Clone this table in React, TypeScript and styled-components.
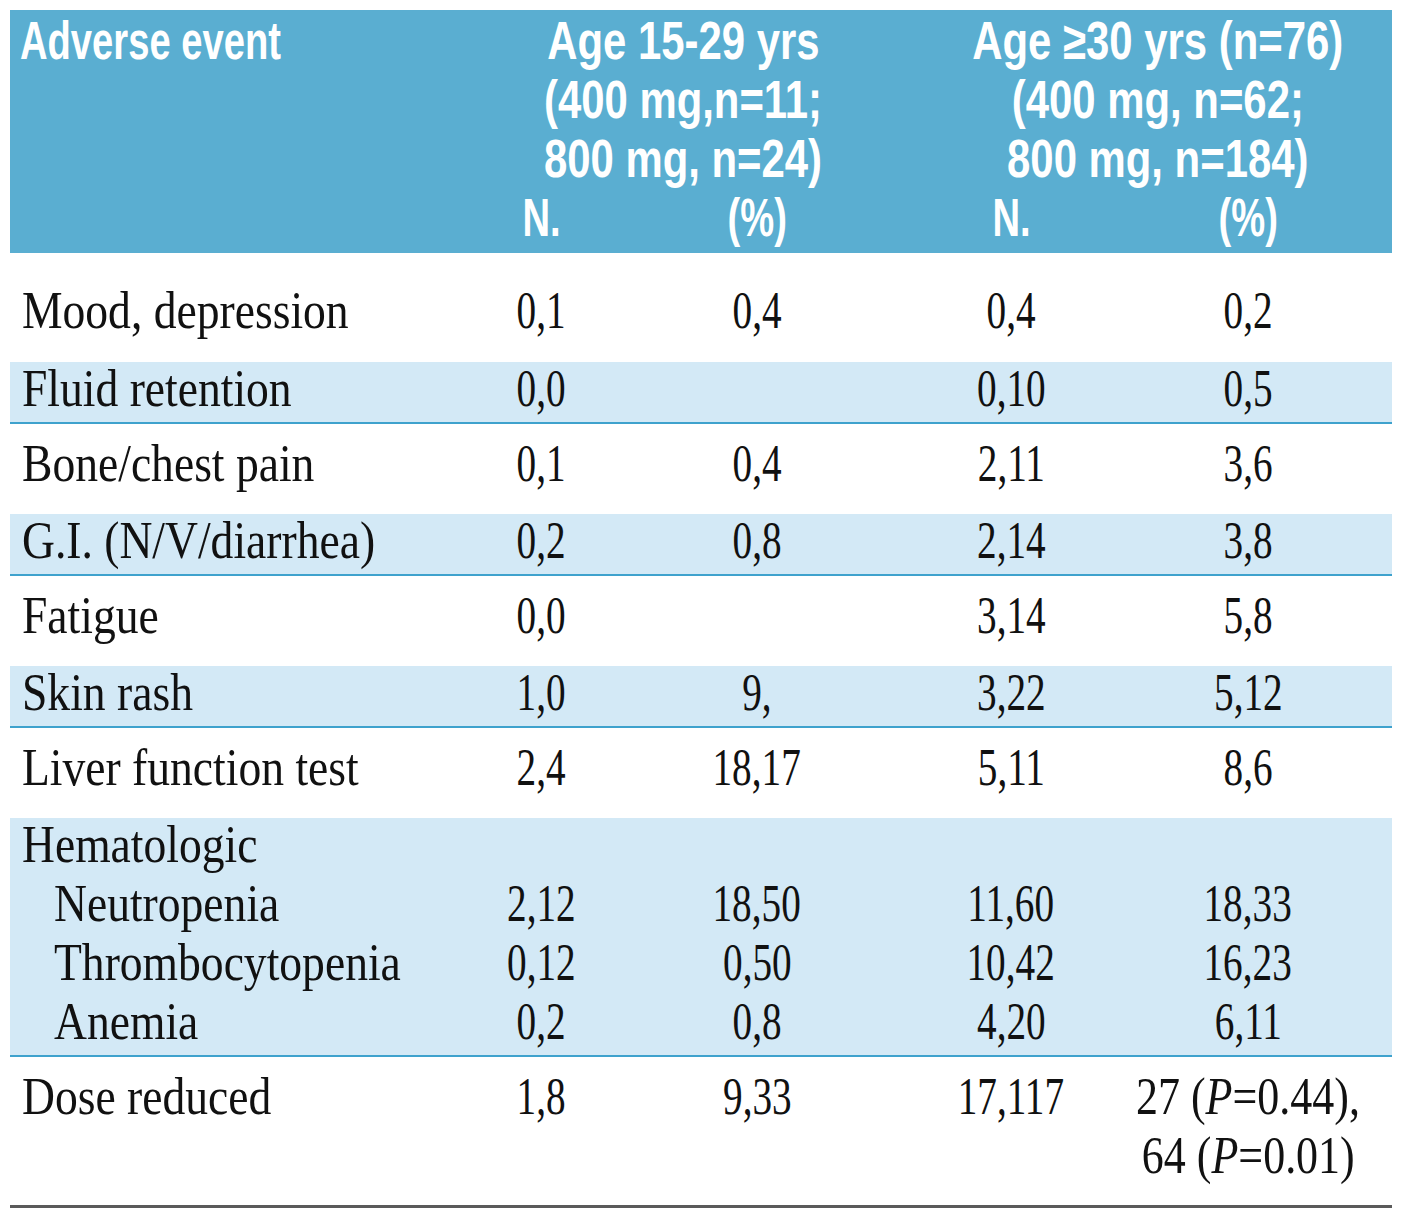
import React from "react";
import styled, { createGlobalStyle } from "styled-components";

const GlobalStyle = createGlobalStyle`
  html, body {
    margin: 0;
    padding: 0;
    background: #fff;
  }
  body {
    font-family: "Liberation Serif", "Times New Roman", serif;
  }
`;

// label | N. | (%) | gap | N. | (%)
const COLS = "430px 202px 230px 46px 186px 288px";

const Table = styled.div`
  width: 1382px;
  margin: 10px 0 0 10px;
  border-bottom: 3px solid #5a5a5a;
`;

const Head = styled.div`
  background: #5aaed1;
  color: #fff;
  font-family: "Liberation Sans", Arial, sans-serif;
  font-weight: 700;
  font-size: 53px;
  line-height: 59px;
  padding: 1px 0 6px;
`;

const HeadTop = styled.div`
  display: grid;
  grid-template-columns: 510px 326px 100px 424px 22px;
`;

const HeadCell = styled.div<{ $col: number; $left?: boolean }>`
  grid-column: ${(p) => p.$col};
  display: flex;
  flex-direction: column;
  align-items: ${(p) => (p.$left ? "flex-start" : "center")};
  padding-left: ${(p) => (p.$left ? "10px" : "0")};
`;

const Line = styled.div`
  display: grid;
  grid-template-columns: ${COLS};
`;

const Squeeze = styled.span<{ $x: number; $origin?: string }>`
  display: inline-block;
  white-space: nowrap;
  transform: scaleX(${(p) => p.$x});
  transform-origin: ${(p) => p.$origin ?? "center"};
`;

const Band = styled.div<{
  $tint?: boolean;
  $top: number;
  $bottom: number;
  $rule?: boolean;
}>`
  display: flex;
  flex-direction: column;
  gap: 7px;
  background: ${(p) => (p.$tint ? "#d3e9f6" : "#fff")};
  padding: ${(p) => p.$top}px 0 ${(p) => p.$bottom}px;
  border-bottom: ${(p) => (p.$rule ? "2px solid #3ea2cd" : "none")};
  color: #111;
  font-size: 53px;
  line-height: 52px;

  ${Line} {
    height: 52px;
  }
`;

const Label = styled.div<{ $indent?: boolean }>`
  grid-column: 1;
  padding-left: ${(p) => (p.$indent ? "44px" : "12px")};
`;

const Value = styled.div<{ $col: number }>`
  grid-column: ${(p) => p.$col};
  display: flex;
  justify-content: center;
`;

const Em = styled.i`
  font-style: italic;
`;

const VALUE_COLS = [2, 3, 5, 6];

type Cell = React.ReactNode;

const DataLine: React.FC<{
  label?: string;
  indent?: boolean;
  values?: Cell[];
  wide?: boolean[];
}> = ({ label, indent, values = [], wide = [] }) => (
  <Line>
    {label && (
      <Label $indent={indent}>
        <Squeeze $x={0.86} $origin="left">
          {label}
        </Squeeze>
      </Label>
    )}
    {values.map((v, i) =>
      v ? (
        <Value key={i} $col={VALUE_COLS[i]}>
          <Squeeze $x={wide[i] ? 0.83 : 0.74}>{v}</Squeeze>
        </Value>
      ) : null
    )}
  </Line>
);

const simple: { label: string; values: string[] }[] = [
  { label: "Mood, depression", values: ["0,1", "0,4", "0,4", "0,2"] },
  { label: "Fluid retention", values: ["0,0", "", "0,10", "0,5"] },
  { label: "Bone/chest pain", values: ["0,1", "0,4", "2,11", "3,6"] },
  { label: "G.I. (N/V/diarrhea)", values: ["0,2", "0,8", "2,14", "3,8"] },
  { label: "Fatigue", values: ["0,0", "", "3,14", "5,8"] },
  { label: "Skin rash", values: ["1,0", "9,", "3,22", "5,12"] },
  { label: "Liver function test", values: ["2,4", "18,17", "5,11", "8,6"] },
];

const hematologic = [
  { label: "Neutropenia", values: ["2,12", "18,50", "11,60", "18,33"] },
  { label: "Thrombocytopenia", values: ["0,12", "0,50", "10,42", "16,23"] },
  { label: "Anemia", values: ["0,2", "0,8", "4,20", "6,11"] },
];

const App: React.FC = () => {
  return (
    <>
      <GlobalStyle />
      <Table>
        <Head>
          <HeadTop>
            <HeadCell $col={1} $left>
              <Squeeze $x={0.72} $origin="left">
                Adverse event
              </Squeeze>
            </HeadCell>
            <HeadCell $col={2}>
              <Squeeze $x={0.79}>Age 15-29 yrs</Squeeze>
              <Squeeze $x={0.79}>(400 mg,n=11;</Squeeze>
              <Squeeze $x={0.79}>800 mg, n=24)</Squeeze>
            </HeadCell>
            <HeadCell $col={4}>
              <Squeeze $x={0.79}>Age ≥30 yrs (n=76)</Squeeze>
              <Squeeze $x={0.79}>(400 mg, n=62;</Squeeze>
              <Squeeze $x={0.79}>800 mg, n=184)</Squeeze>
            </HeadCell>
          </HeadTop>
          <Line>
            {["N.", "(%)", "N.", "(%)"].map((t, i) => (
              <Value key={i} $col={VALUE_COLS[i]}>
                <Squeeze $x={0.72}>{t}</Squeeze>
              </Value>
            ))}
          </Line>
        </Head>

        {simple.map((row, i) => {
          const tint = i % 2 === 1;
          const first = i === 0;
          return (
            <Band
              key={row.label}
              $tint={tint}
              $rule={tint}
              $top={first ? 31 : tint ? 0 : 13}
              $bottom={first ? 26 : tint ? 8 : 25}
            >
              <DataLine label={row.label} values={row.values} />
            </Band>
          );
        })}

        <Band $tint $rule $top={0} $bottom={8}>
          <DataLine label="Hematologic" />
          {hematologic.map((row) => (
            <DataLine key={row.label} label={row.label} values={row.values} indent />
          ))}
        </Band>

        <Band $top={13} $bottom={24}>
          <DataLine
            label="Dose reduced"
            values={[
              "1,8",
              "9,33",
              "17,117",
              <>
                27 (<Em>P</Em>=0.44),
              </>,
            ]}
            wide={[false, false, false, true]}
          />
          <DataLine
            values={[
              "",
              "",
              "",
              <>
                64 (<Em>P</Em>=0.01)
              </>,
            ]}
            wide={[false, false, false, true]}
          />
        </Band>
      </Table>
    </>
  );
};

export default App;
